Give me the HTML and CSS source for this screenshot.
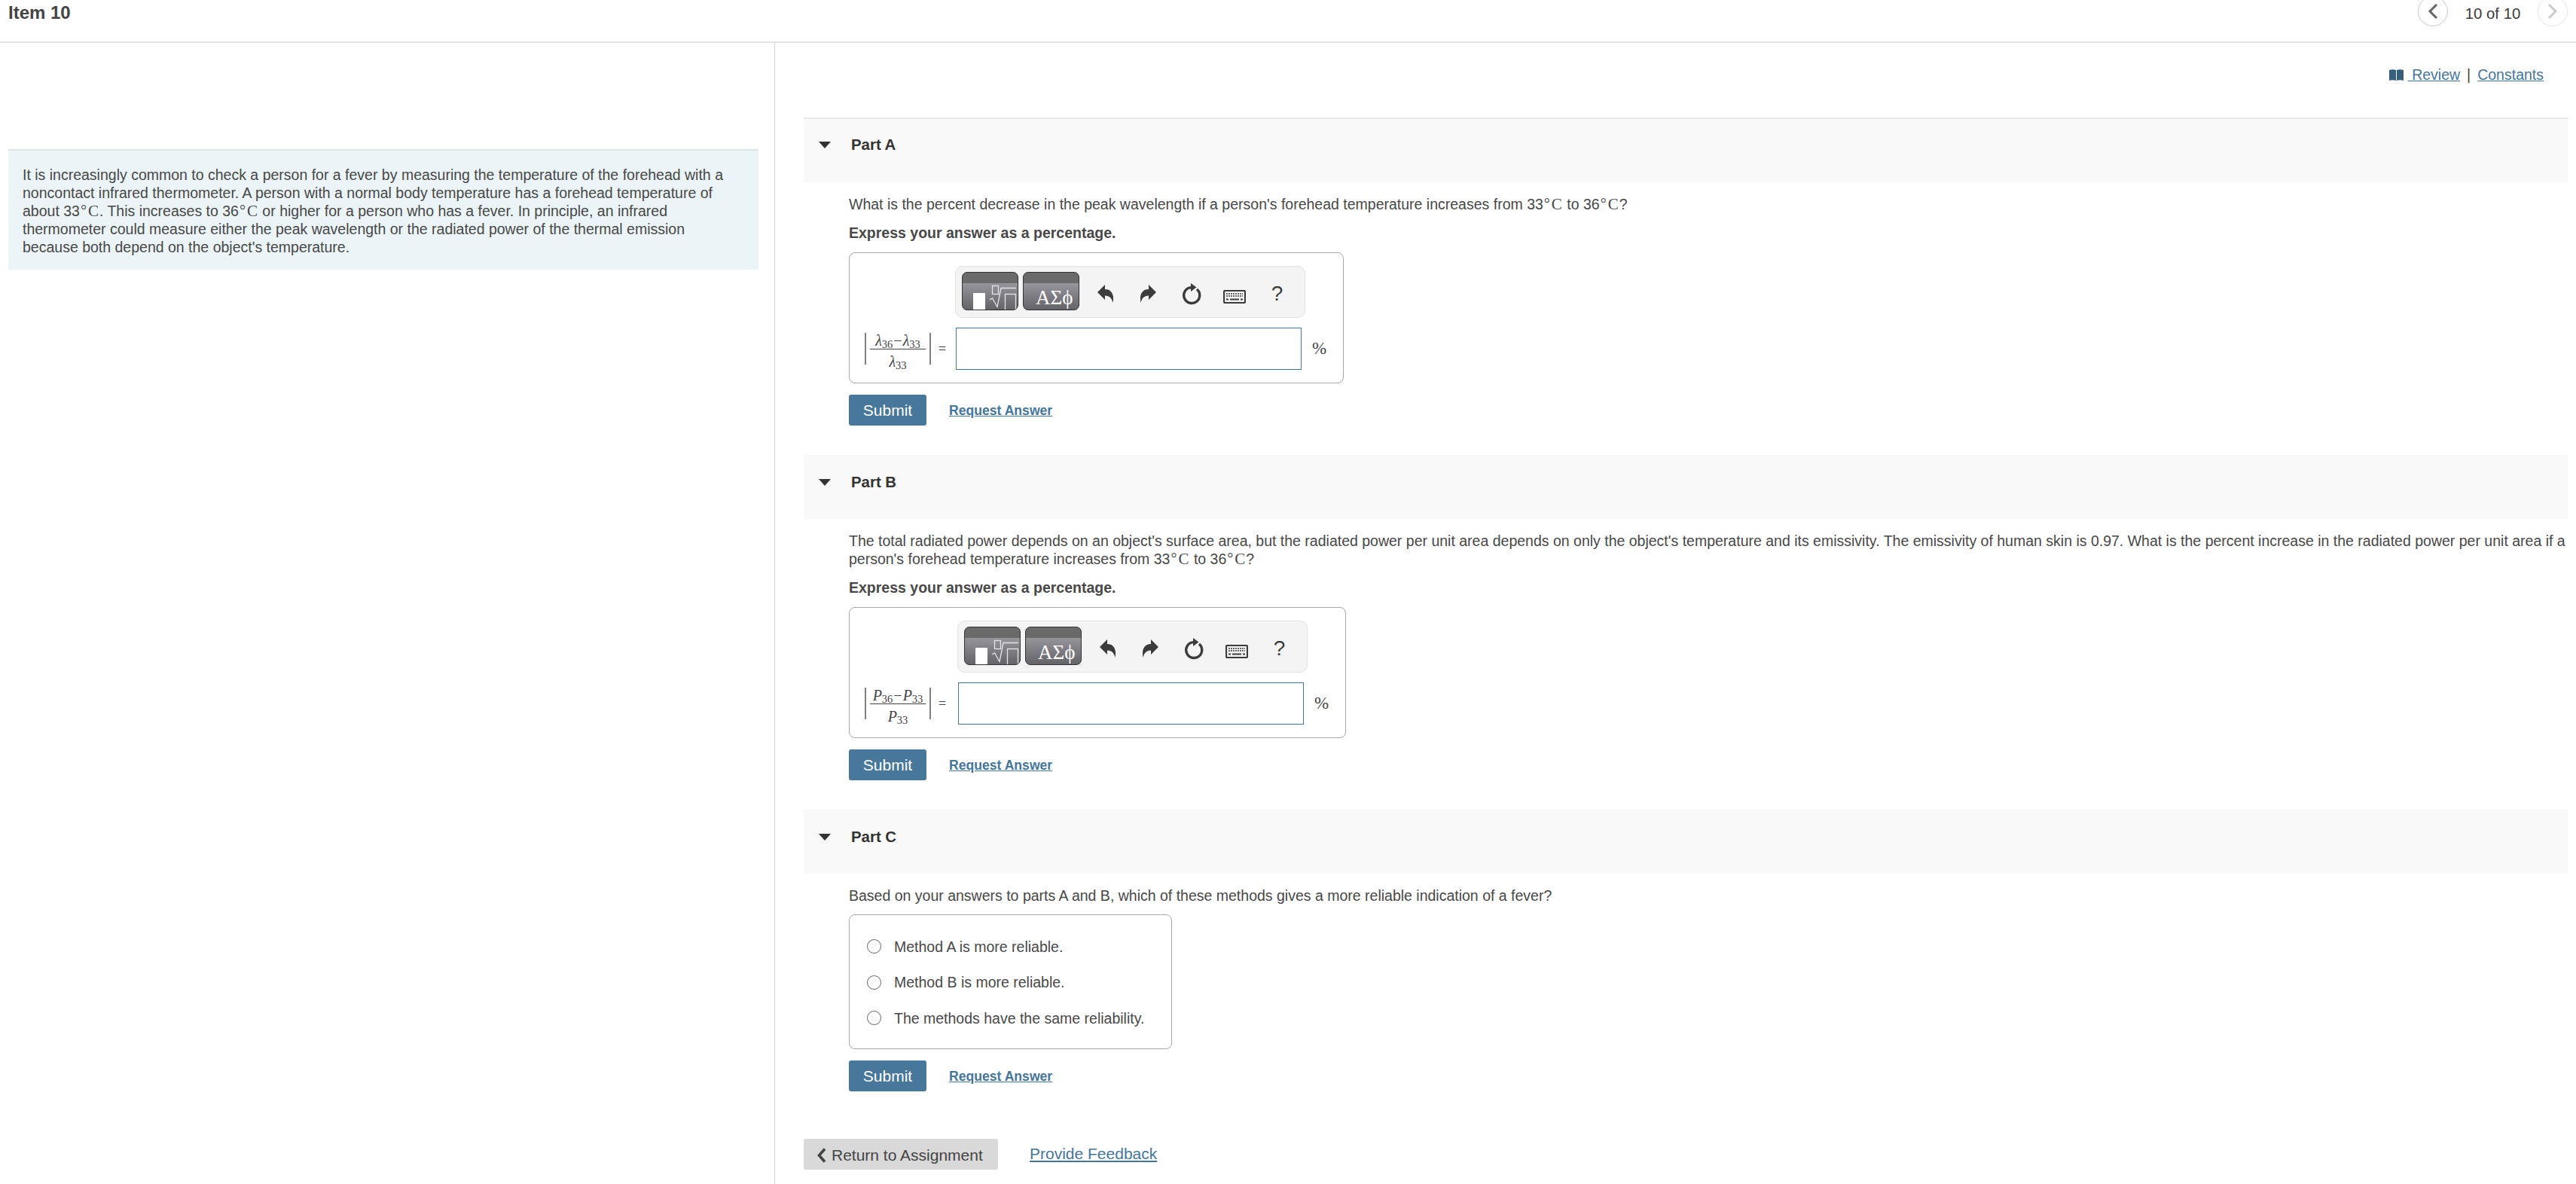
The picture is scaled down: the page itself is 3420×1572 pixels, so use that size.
FILE: index.html
```html
<!DOCTYPE html>
<html lang="en">
<head>
<meta charset="utf-8">
<title>Item 10</title>
<link rel="stylesheet" href="styles.css">
</head>
<body>
<svg class="defs" width="0" height="0" aria-hidden="true">
  <defs>
    <symbol id="i-undo" viewBox="0 0 21 24"><path d="M0 10 10 0V6C17 6 23 11 20.500 24 19 18 16 14.500 10 14.500V20Z"/></symbol>
    <symbol id="i-redo" viewBox="0 0 21 24"><path d="M21 10 11 0V6C4 6-2 11 .5 24 2 18 5 14.500 11 14.500V20Z"/></symbol>
    <symbol id="i-reset" viewBox="0 0 26 29"><path d="M12 5.600A10.500 10.500 0 1 0 20 8" fill="none" stroke="currentColor" stroke-width="3.400"/><path d="M12 0 19.500 5.500 12 11Z"/></symbol>
    <symbol id="i-keys" viewBox="0 0 30 18">
      <rect x="1" y="1" width="28" height="16" rx="1.500" fill="none" stroke="currentColor" stroke-width="2.200"/>
      <path d="M4 5h22M4 8h22" fill="none" stroke="currentColor" stroke-width="1.600" stroke-dasharray="2 1"/>
      <path d="M4 12.500h3M9 12.500h12M23 12.500h3" fill="none" stroke="currentColor" stroke-width="2"/>
    </symbol>
    <symbol id="i-template" viewBox="0 0 75 51">
      <rect x="15" y="28" width="16" height="23" fill="#fff"/>
      <g fill="none" stroke="#e4e4e6" stroke-width="1.300">
        <rect x="40.500" y="18.500" width="8" height="11"/>
        <path d="M37 37 40.500 35 47 46.500 52 21.500H72"/>
        <rect x="57.500" y="29.500" width="14" height="21.500"/>
      </g>
    </symbol>
  </defs>
</svg>

<header class="top">
  <h1 class="item-title">Item 10</h1>
  <nav class="pager">
    <span class="pager-btn">
      <svg width="14" height="22" viewBox="0 0 14 22"><path d="M12 2 3 11l9 9" fill="none" stroke="#666" stroke-width="3"/></svg>
    </span>
    <span class="pager-count">10 of 10</span>
    <span class="pager-btn pager-btn-off">
      <svg width="14" height="22" viewBox="0 0 14 22"><path d="M2 2l9 9-9 9" fill="none" stroke="#ccc" stroke-width="3"/></svg>
    </span>
  </nav>
</header>

<main class="layout">
  <aside class="left">
    <div class="callout">It is increasingly common to check a person for a fever by measuring the temperature of the forehead with a noncontact infrared thermometer. A person with a normal body temperature has a forehead temperature of about <span class="mj">33<span class="deg">°</span><span class="cel">C</span></span>. This increases to <span class="mj">36<span class="deg">°</span><span class="cel">C</span></span> or higher for a person who has a fever. In principle, an infrared thermometer could measure either the peak wavelength or the radiated power of the thermal emission because both depend on the object's temperature.</div>
  </aside>

  <section class="right">
    <div class="links">
      <svg class="book" width="19" height="15" viewBox="0 0 19 15"><path d="M0 1C3 0 6 0 9 1V15C6 14 3 14 0 15ZM10 1C13 0 16 0 19 1V15C16 14 13 14 10 15Z"/></svg>
      <a href="#" class="link link-review">&nbsp;Review</a><span class="sep">|</span><a href="#" class="link">Constants</a>
    </div>

    <article class="part part-first">
      <div class="band"><span class="caret"></span><h2 class="part-title">Part A</h2></div>
      <div class="part-body">
        <p class="q">What is the percent decrease in the peak wavelength if a person's forehead temperature increases from <span class="mj">33<span class="deg">°</span><span class="cel">C</span></span> to <span class="mj">36<span class="deg">°</span><span class="cel">C</span></span>?</p>
        <p class="hint">Express your answer as a percentage.</p>
        <div class="answer">
          <div class="toolbar">
            <button class="tb-btn"><svg width="75" height="51"><use href="#i-template"/></svg></button>
            <button class="tb-btn tb-greek">ΑΣϕ</button>
            <span class="tb-icon"><svg width="21" height="24"><use href="#i-undo"/></svg></span>
            <span class="tb-icon"><svg width="21" height="24"><use href="#i-redo"/></svg></span>
            <span class="tb-icon"><svg width="26" height="29"><use href="#i-reset"/></svg></span>
            <span class="tb-icon tb-keys"><svg width="30" height="18"><use href="#i-keys"/></svg></span>
            <span class="tb-icon tb-help">?</span>
          </div>
          <div class="math math-a">
            <span class="abs">
              <span class="frac">
                <span class="num"><i>λ</i><sub>36</sub><span class="minus">−</span><i>λ</i><sub>33</sub></span>
                <span class="den"><i>λ</i><sub>33</sub></span>
              </span>
            </span>
            <span class="eq">=</span>
          </div>
          <input class="field" type="text" aria-label="Answer">
          <span class="unit">%</span>
        </div>
        <div class="actions">
          <button class="submit">Submit</button>
          <a href="#" class="req">Request Answer</a>
        </div>
      </div>
    </article>

    <article class="part">
      <div class="band"><span class="caret"></span><h2 class="part-title">Part B</h2></div>
      <div class="part-body">
        <p class="q">The total radiated power depends on an object's surface area, but the radiated power per unit area depends on only the object's temperature and its emissivity. The emissivity of human skin is 0.97. What is the percent increase in the radiated power per unit area if a person's forehead temperature increases from <span class="mj">33<span class="deg">°</span><span class="cel">C</span></span> to <span class="mj">36<span class="deg">°</span><span class="cel">C</span></span>?</p>
        <p class="hint">Express your answer as a percentage.</p>
        <div class="answer">
          <div class="toolbar">
            <button class="tb-btn"><svg width="75" height="51"><use href="#i-template"/></svg></button>
            <button class="tb-btn tb-greek">ΑΣϕ</button>
            <span class="tb-icon"><svg width="21" height="24"><use href="#i-undo"/></svg></span>
            <span class="tb-icon"><svg width="21" height="24"><use href="#i-redo"/></svg></span>
            <span class="tb-icon"><svg width="26" height="29"><use href="#i-reset"/></svg></span>
            <span class="tb-icon tb-keys"><svg width="30" height="18"><use href="#i-keys"/></svg></span>
            <span class="tb-icon tb-help">?</span>
          </div>
          <div class="math math-b">
            <span class="abs">
              <span class="frac">
                <span class="num"><i>P</i><sub>36</sub><span class="minus">−</span><i>P</i><sub>33</sub></span>
                <span class="den"><i>P</i><sub>33</sub></span>
              </span>
            </span>
            <span class="eq">=</span>
          </div>
          <input class="field" type="text" aria-label="Answer">
          <span class="unit">%</span>
        </div>
        <div class="actions">
          <button class="submit">Submit</button>
          <a href="#" class="req">Request Answer</a>
        </div>
      </div>
    </article>

    <article class="part">
      <div class="band"><span class="caret"></span><h2 class="part-title">Part C</h2></div>
      <div class="part-body">
        <p class="q">Based on your answers to parts A and B, which of these methods gives a more reliable indication of a fever?</p>
        <div class="choices">
          <label class="choice"><input type="radio" name="c" class="radio">Method A is more reliable.</label>
          <label class="choice"><input type="radio" name="c" class="radio">Method B is more reliable.</label>
          <label class="choice"><input type="radio" name="c" class="radio">The methods have the same reliability.</label>
        </div>
        <div class="actions">
          <button class="submit">Submit</button>
          <a href="#" class="req">Request Answer</a>
        </div>
      </div>
    </article>

    <footer class="foot">
      <a href="#" class="return">
        <svg width="12" height="20" viewBox="0 0 12 20"><path d="M10 1.500 2.500 10l7.500 8.500" fill="none" stroke="#444" stroke-width="3.600"/></svg>
        Return to Assignment
      </a>
      <a href="#" class="feedback">Provide Feedback</a>
    </footer>
  </section>
</main>
</body>
</html>
```

FILE: styles.css
```css
* { box-sizing: border-box; }

html, body {
  margin: 0;
  height: 1572px;
  overflow: hidden;
}

body {
  background: #fff;
  color: #484848;
  font-family: "Liberation Sans", Arial, sans-serif;
  font-size: 19.5px;
  line-height: 24px;
}

.defs { position: absolute; }

.top {
  height: 57px;
  display: flex;
  justify-content: space-between;
  padding-left: 11px;
  border-bottom: 2px solid #e3e3e3;
}

.item-title {
  margin: 0;
  font-size: 24px;
  line-height: 34px;
  font-weight: 700;
  color: #444;
}

.pager {
  display: flex;
  align-items: flex-start;
  margin-top: -5px;
  padding-right: 11px;
}

.pager-btn {
  width: 40px;
  height: 40px;
  border: 1px solid #c8c8c8;
  border-radius: 50%;
  display: flex;
  align-items: center;
  justify-content: center;
}

.pager-btn-off { border-color: #e6e6e6; }

.pager-count {
  width: 119px;
  text-align: center;
  font-size: 20.4px;
  line-height: 46px;
  color: #3c3c3c;
}

.layout {
  display: flex;
  height: 1515px;
}

.left {
  flex: 0 0 1029px;
  padding: 141px 21px 0 11px;
  border-right: 1px solid #c9d4db;
}

.callout {
  background: #ebf4f6;
  border-top: 2px solid #dfe3e4;
  padding: 20px 19px 18px;
  height: 160px;
}

.mj { white-space: nowrap; }

.deg {
  font-family: "Liberation Serif", "Times New Roman", serif;
  font-size: 20px;
  line-height: 0;
  vertical-align: 1px;
  margin: 0 2px 0 1px;
}

.cel {
  font-family: "Liberation Serif", "Times New Roman", serif;
  font-size: 21px;
  line-height: 0;
  margin-right: 1px;
}

.right {
  flex: 1;
  min-width: 0;
  padding: 0 11px 0 38px;
}

.links {
  height: 99px;
  padding-top: 30px;
  display: flex;
  justify-content: flex-end;
  align-items: flex-start;
  padding-right: 32px;
}

.book {
  fill: #35607d;
  margin: 5px 6px 0 0;
}

.link {
  color: #44769c;
  text-decoration: underline;
}

.sep {
  margin: 0 9px;
  color: #444;
}

.part { margin-bottom: 39px; }

.band {
  height: 85px;
  background: #f9f9f9;
  display: flex;
  align-items: flex-start;
  padding: 24px 0 0 20px;
}

.part-first .band {
  height: 86px;
  border-top: 2px solid #e8e8e8;
  padding-top: 22px;
}

.caret {
  width: 0;
  height: 0;
  margin-top: 8px;
  border-left: 8px solid transparent;
  border-right: 8px solid transparent;
  border-top: 9px solid #333;
}

.part-title {
  margin: 0 0 0 27px;
  font-size: 20.4px;
  line-height: 24px;
  font-weight: 700;
  color: #333;
}

.part-body { padding-left: 60px; }

.q { margin: 17px 0 0; }

.hint {
  margin: 14px 0;
  font-weight: 700;
}

.answer {
  display: inline-grid;
  grid-template-columns: auto 465px 50px;
  row-gap: 13px;
  align-items: center;
  padding: 17px 0 17px 20px;
  border: 1px solid #a8a8a8;
  border-radius: 8px;
  vertical-align: top;
}

.toolbar {
  grid-column: 2;
  grid-row: 1;
  height: 69px;
  display: flex;
  align-items: flex-start;
  padding: 7px 0 0 8px;
  background: #f4f4f4;
  border: 1px solid #e2e2e2;
  border-radius: 10px;
}

.tb-btn {
  width: 75px;
  height: 51px;
  margin: 0 6px 0 0;
  padding: 0;
  border: 1px solid #333;
  border-radius: 7px;
  overflow: hidden;
  display: block;
  background: linear-gradient(#6a6a6a 0 14px, #96959c 14px, #646368);
}

.tb-btn svg {
  display: block;
  margin: -1px;
}

.tb-greek {
  color: #fff;
  font-family: "Liberation Serif", "Times New Roman", serif;
  font-size: 27px;
  line-height: 26px;
  padding: 16px 0 0 16px;
  text-align: left;
  white-space: nowrap;
}

.tb-icon {
  width: 57px;
  height: 58px;
  display: flex;
  align-items: center;
  justify-content: center;
  color: #3c3c3c;
  fill: #3c3c3c;
}

.tb-keys { padding-top: 8px; }

.tb-help {
  font-size: 28px;
  line-height: 1;
}

.math {
  grid-column: 1;
  grid-row: 2;
  display: flex;
  align-items: center;
  font-family: "Liberation Serif", "Times New Roman", serif;
  color: #444;
}

.math-a { width: 120px; }
.math-b { width: 123px; }

.abs {
  display: block;
  border-left: 2px solid #808080;
  border-right: 2px solid #808080;
  height: 42px;
  padding: 0 5px;
}

.frac {
  display: flex;
  flex-direction: column;
  align-items: center;
  font-size: 20px;
  line-height: 20px;
  min-width: 74px;
}

.num {
  border-bottom: 1.5px solid #444;
  display: block;
  height: 21.500px;
  width: 100%;
  text-align: center;
  white-space: nowrap;
}

.den {
  display: block;
  height: 20px;
  margin-top: 6px;
}

.frac sub {
  font-size: 14.500px;
  line-height: 0;
  vertical-align: -3px;
}

.minus { margin: 0 1px; }

.eq {
  margin-left: 10px;
  font-size: 18px;
}

.field {
  grid-column: 2;
  grid-row: 2;
  width: 459px;
  height: 56px;
  margin-left: 1px;
  border: 1.5px solid #44769c;
  background: #fff;
  padding: 0;
}

.unit {
  grid-column: 3;
  grid-row: 2;
  font-family: "Liberation Serif", "Times New Roman", serif;
  font-size: 23px;
  text-align: left;
  padding-left: 9px;
}

.actions {
  display: flex;
  align-items: center;
  margin-top: 15px;
  height: 41px;
}

.submit {
  width: 103px;
  height: 41px;
  padding: 0;
  border: 0;
  border-radius: 3px;
  background: #47779b;
  color: #fff;
  font: 21px/41px "Liberation Sans", Arial, sans-serif;
}

.req {
  margin: 0 0 0 30px;
  color: #44769c;
  font-size: 17.6px;
  font-weight: 700;
  text-decoration: underline;
}

.choices {
  width: 429px;
  height: 179px;
  margin-top: 13px;
  padding: 18px 0 0 23px;
  border: 1px solid #a8a8a8;
  border-radius: 8px;
}

.choice {
  display: flex;
  align-items: center;
  height: 47.500px;
  white-space: nowrap;
}

.radio {
  appearance: none;
  width: 19px;
  height: 19px;
  margin: 0 17px 0 0;
  border: 1.5px solid #666;
  border-radius: 50%;
  background: #fff;
}

.foot {
  display: flex;
  align-items: flex-start;
  margin-top: 63px;
}

.return {
  width: 258px;
  height: 41px;
  display: flex;
  align-items: center;
  gap: 7px;
  padding: 2px 0 0 18px;
  background: #d9d9d9;
  border-radius: 3px;
  color: #444;
  font-size: 21px;
  text-decoration: none;
}

.feedback {
  margin: 8px 0 0 42px;
  color: #44769c;
  font-size: 21px;
  text-decoration: underline;
}
```
